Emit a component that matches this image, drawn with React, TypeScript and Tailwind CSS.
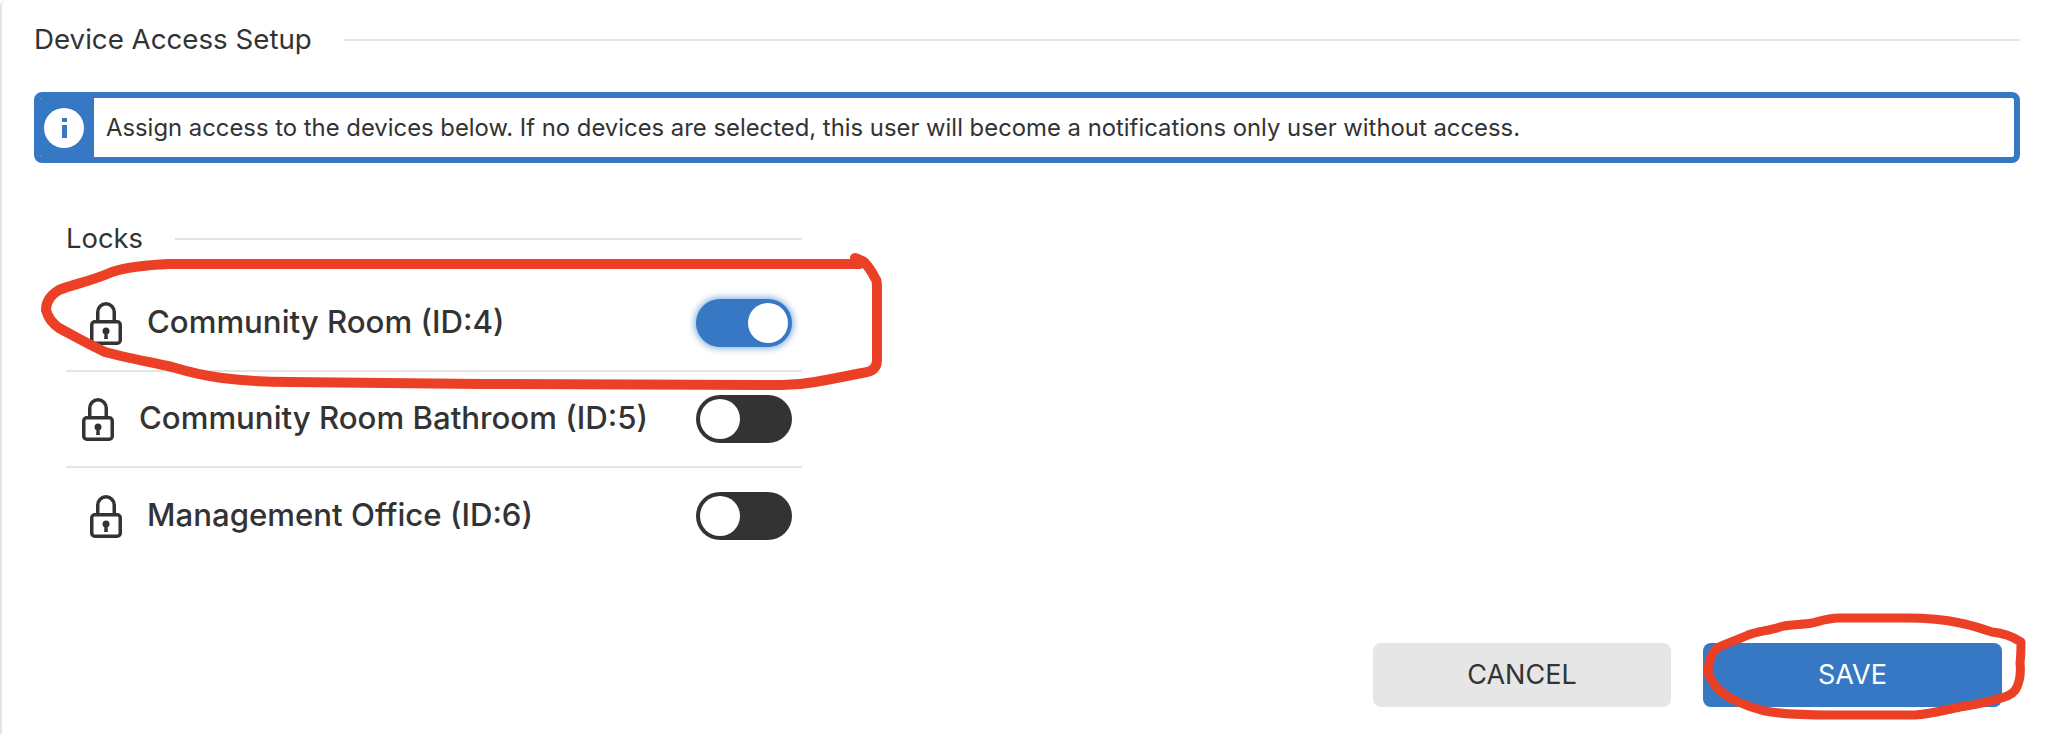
import React from 'react';

const devices = [
    { name: 'Community Room (ID:4)', on: true, indent: 'pl-6' },
    { name: 'Community Room Bathroom (ID:5)', on: false, indent: 'pl-4' },
    { name: 'Management Office (ID:6)', on: false, indent: 'pl-6' },
];

const LockIcon = () => (
    <svg width="32" height="43" viewBox="0 0 32 43" className="shrink-0 text-[#333333]">
        <path d="M7.75 19V10a8.25 8.25 0 0 1 16.5 0V19" fill="none" stroke="currentColor" strokeWidth="3.5" />
        <rect x="1.75" y="19.75" width="28.5" height="21.5" rx="3" fill="none" stroke="currentColor" strokeWidth="3.5" />
        <circle cx="16" cy="29" r="3.5" fill="currentColor" />
        <path d="M14.6 30h2.8l.5 7h-3.8z" fill="currentColor" />
    </svg>
);

const Toggle = ({ on }: { on: boolean }) => (
    <div
        className={`flex h-12 w-24 shrink-0 items-center rounded-full p-1 ${
            on ? 'justify-end bg-[#3678c3] shadow-[0_0_6px_2px_rgba(54,120,195,0.55)]' : 'justify-start bg-[#333333]'
        }`}
    >
        <div className="h-10 w-10 rounded-full bg-white" />
    </div>
);

const Annotations = () => (
    <svg className="pointer-events-none absolute inset-0" width="2048" height="734" viewBox="0 0 2048 734" fill="none">
        <path
            d="M853 258 L858 264 L167 264 C145 265 125 267 110 272 C90 281 72 284 57 290 C47 296 44 303 44 310 C46 318 50 323 57 328 C72 336 88 345 103 352 C125 358 148 362 170 367 C187 372 203 376 220 378 C243 381 265 382 287 382 L480 384 L780 385 C790 385 802 384 813 382 C830 379 845 376 860 373 C870 372 875 368 875 360 L875 290 C875 284 875 280 873 278 C870 272 866 266 862 262 C859 260 856 259 853 258 Z"
            stroke="#ec4026"
            strokeWidth="10"
            strokeLinejoin="round"
        />
        <path
            d="M2019 642 C2010 636 2000 633 1990 632 C1980 629 1970 625 1958 623 C1940 619 1922 618 1904 618 L1837 618 C1827 618 1818 621 1810 623 C1799 625 1788 624 1778 627 C1767 631 1756 631 1746 635 C1735 640 1725 643 1715 648 C1708 655 1706 664 1706 673 C1710 684 1718 692 1728 698 C1742 705 1755 710 1769 712 C1789 715 1808 715 1828 715 L1913 715 C1929 714 1943 710 1958 707 C1972 705 1986 702 1999 698 C2008 696 2013 692 2015 687 C2018 680 2019 672 2018 663 C2019 655 2019 649 2019 642 Z"
            stroke="#ec4026"
            strokeWidth="9"
            strokeLinejoin="round"
        />
    </svg>
);

export default function App() {
    return (
        <div className="relative h-[734px] w-full overflow-hidden rounded-tl-md border-l-2 border-[#e5e5e5] bg-white pl-8 pr-7 font-['Inter',sans-serif] text-[#333333]">
            {/* Encabezado */}
            <div className="flex h-[80px] items-center gap-8">
                <h2 className="text-[27.7px] leading-none font-normal">Device Access Setup</h2>
                <div className="h-0.5 flex-1 bg-[#e5e5e5]" />
            </div>

            {/* Aviso */}
            <div className="mt-3 flex h-[71px] items-stretch overflow-hidden rounded-lg border-[6px] border-[#3678c3] bg-white">
                <div className="flex w-[54px] shrink-0 items-center justify-start bg-[#3678c3] pl-1">
                    <div className="flex h-10 w-10 flex-col items-center justify-center gap-[3px] rounded-full bg-white">
                        <div className="h-1 w-[5px] bg-[#3678c3]" />
                        <div className="h-[13px] w-[5px] bg-[#3678c3]" />
                    </div>
                </div>
                <p className="flex-1 pl-3 text-[23.85px] leading-[59px]">
                    Assign access to the devices below. If no devices are selected, this user will become a notifications only user without access.
                </p>
            </div>

            {/* Lista de cerraduras */}
            <div className="mt-[60px] w-[768px] pl-8">
                <div className="flex h-8 items-center gap-8">
                    <span className="text-[27.4px] leading-none">Locks</span>
                    <div className="h-0.5 flex-1 bg-[#e5e5e5]" />
                </div>
                <div className="mt-[21px]">
                    {devices.map((d, i) => (
                        <div
                            key={d.name}
                            className={`flex h-[96px] items-center justify-between pr-[10px] ${d.indent} ${
                                i < devices.length - 1 ? 'border-b-2 border-[#e5e5e5]' : ''
                            }`}
                        >
                            <div className="flex items-center gap-[25px]">
                                <LockIcon />
                                <span className="text-[31.2px] leading-none font-medium">{d.name}</span>
                            </div>
                            <Toggle on={d.on} />
                        </div>
                    ))}
                </div>
            </div>

            {/* Botones */}
            <div className="absolute right-[46px] bottom-[27px] flex gap-8">
                <button className="h-16 w-[298px] rounded-lg bg-[#e6e6e6] text-[27px] text-[#333333]">CANCEL</button>
                <button className="h-16 w-[299px] rounded-lg bg-[#3678c3] text-[27px] text-white">SAVE</button>
            </div>

            <Annotations />
        </div>
    );
}
